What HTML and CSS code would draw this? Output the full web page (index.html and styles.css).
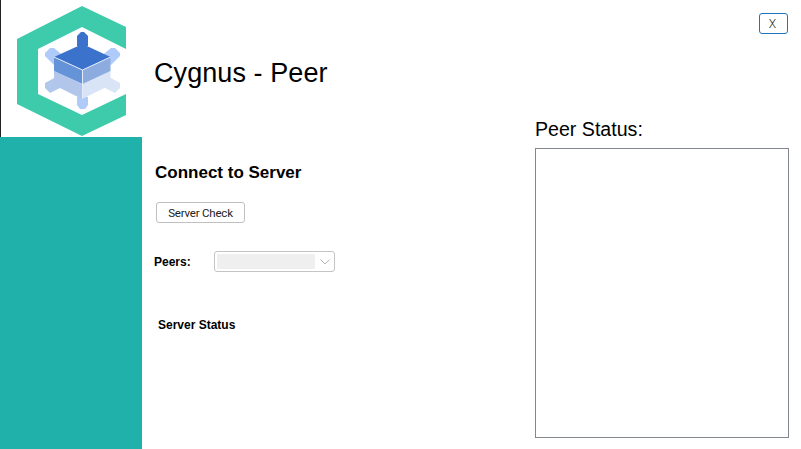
FILE: index.html
```html
<!DOCTYPE html>
<html lang="en">
<head>
<meta charset="utf-8">
<title>Cygnus - Peer</title>
<link rel="stylesheet" href="styles.css">
</head>
<body>
<div class="form">
  <aside class="sidebar">
    <div class="logo-box">
      <svg class="logo" width="141" height="137" viewBox="1 0 141 137" aria-label="Cygnus logo">
        <polygon class="hex" points="82,6 126,27 126,49 82,27 38,49 38,94 82,115 126,94 126,115 82,136 17,104 17,39"/>
        <path class="arm-ul" d="M45,53 L45,56 L54,65 L66,58 L54,48 L50,48 Z"/>
        <path class="arm-ur" d="M120,53 L120,56 L111,65 L99,58 L111,48 L115,48 Z"/>
        <path class="arm-ll" d="M45,83 L45,88 L50,93 L66,85 L56,77 Z"/>
        <path class="arm-lr" d="M120,83 L120,88 L115,93 L99,85 L109,77 Z"/>
        <path class="stem-t" d="M77,46 L77,36 L81,32 L84,32 L88,36 L88,46 Z"/>
        <path class="stem-b" d="M77,97 L77,105 L80,109 L85,109 L88,105 L88,97 Z"/>
        <polygon class="low-l" points="54,71 82,84 82,99 54,85"/>
        <polygon class="low-r" points="110.500,71 82,84 82,99 110.500,85"/>
        <polygon class="mid-l" points="54,57 82.500,70 82.500,84 54,71"/>
        <polygon class="mid-r" points="110.500,57 82.500,70 82.500,84 110.500,71"/>
        <polygon class="top" points="82.500,44 110.500,57 82.500,70 54,57"/>
        <path class="edge" d="M54,57 L82.500,70 L110.500,57 M82.500,70 L82.500,99"/>
      </svg>
    </div>
    <div class="teal"></div>
  </aside>
  <main class="content">
    <div class="close-row"><button class="close" type="button">X</button></div>
    <div class="columns">
      <section class="left">
        <h1 class="title">Cygnus - Peer</h1>
        <h2 class="connect">Connect to Server</h2>
        <button class="check" type="button">Server Check</button>
        <div class="peers">
          <label class="peers-label">Peers:</label>
          <div class="combo">
            <span class="combo-value"></span>
            <svg class="chev" width="10" height="6" viewBox="0 0 10 6"><path d="M0.500,0.500 L5,5 L9.500,0.500"/></svg>
          </div>
        </div>
        <div class="server-status">Server Status</div>
      </section>
      <section class="right">
        <h2 class="peer-status">Peer Status:</h2>
        <div class="status-box"></div>
      </section>
    </div>
  </main>
</div>
</body>
</html>
```
FILE: styles.css
```css
* { box-sizing: border-box; }
html, body { margin: 0; padding: 0; background: #fff; overflow: hidden; }
.form { display: flex; width: 801px; height: 449px; background: #fff; color: #000; font-family: "Liberation Sans", Arial, sans-serif; }
.sidebar { width: 142px; display: flex; flex-direction: column; flex: none; }
.logo-box { height: 137px; border-left: 1px solid #222; background: #fff; }
.logo { display: block; }
.teal { flex: 1; background: #20b2aa; }
.hex { fill: #3dcbac; }
.arm-ul { fill: #aecbfa; }
.arm-ur { fill: #aecbfa; }
.arm-ll { fill: #b1c8ec; }
.arm-lr { fill: #d9e4f7; }
.stem-t { fill: #3b72cb; }
.stem-b { fill: #aecbfa; }
.low-l { fill: #b1c6ea; }
.low-r { fill: #d9e4f7; }
.mid-l { fill: #6593d8; }
.mid-r { fill: #8cacdf; }
.top { fill: #3b72cb; }
.edge { fill: none; stroke: #e4ecf9; stroke-width: 1; }
.content { flex: 1; display: flex; flex-direction: column; min-width: 0; }
.close-row { display: flex; justify-content: flex-end; padding: 13px 13px 0 0; height: 34px; }
.close { width: 29px; height: 21px; padding: 0 2px 0 0; border: 1px solid #1f74bd; border-radius: 3px; background: #fff; color: #222; font: 300 12px Roboto, sans-serif; }
.columns { display: flex; flex: 1; }
.left { width: 393px; padding-left: 12px; display: flex; flex-direction: column; align-items: flex-start; }
.title { margin: 22px 0 0; font-size: 27px; font-weight: 400; line-height: 34px; height: 34px; letter-spacing: 0.080px; }
.connect { margin: 72px 0 0 1px; font-size: 17px; font-weight: 700; line-height: 22px; }
.check { margin: 18px 0 0 2px; width: 89px; height: 21px; padding: 0; border: 1px solid #c0c0c0; border-radius: 3px; background: #fff; color: #222; font: 11.500px Roboto, sans-serif; letter-spacing: -0.200px; }
.peers { display: flex; align-items: center; margin-top: 28px; height: 21px; }
.peers-label { width: 60px; font-size: 12px; font-weight: 700; }
.combo { width: 121px; height: 21px; border: 1px solid #c4c4c4; border-radius: 3px; padding: 2px 4px 2px 2px; display: flex; align-items: center; justify-content: space-between; background: #fff; }
.combo-value { width: 98px; height: 15px; background: #efefef; }
.chev { fill: none; }
.chev path { fill: none; stroke: #b4b4b4; stroke-width: 1; }
.server-status { margin: 46px 0 0 4px; font-size: 12px; font-weight: 700; line-height: 15px; }
.right { width: 254px; display: flex; flex-direction: column; }
.peer-status { margin: 80px 0 0; font-size: 19.600px; font-weight: 400; line-height: 30px; height: 30px; }
.status-box { width: 254px; height: 290px; margin-top: 4px; border: 1px solid #828790; background: #fff; }
```
